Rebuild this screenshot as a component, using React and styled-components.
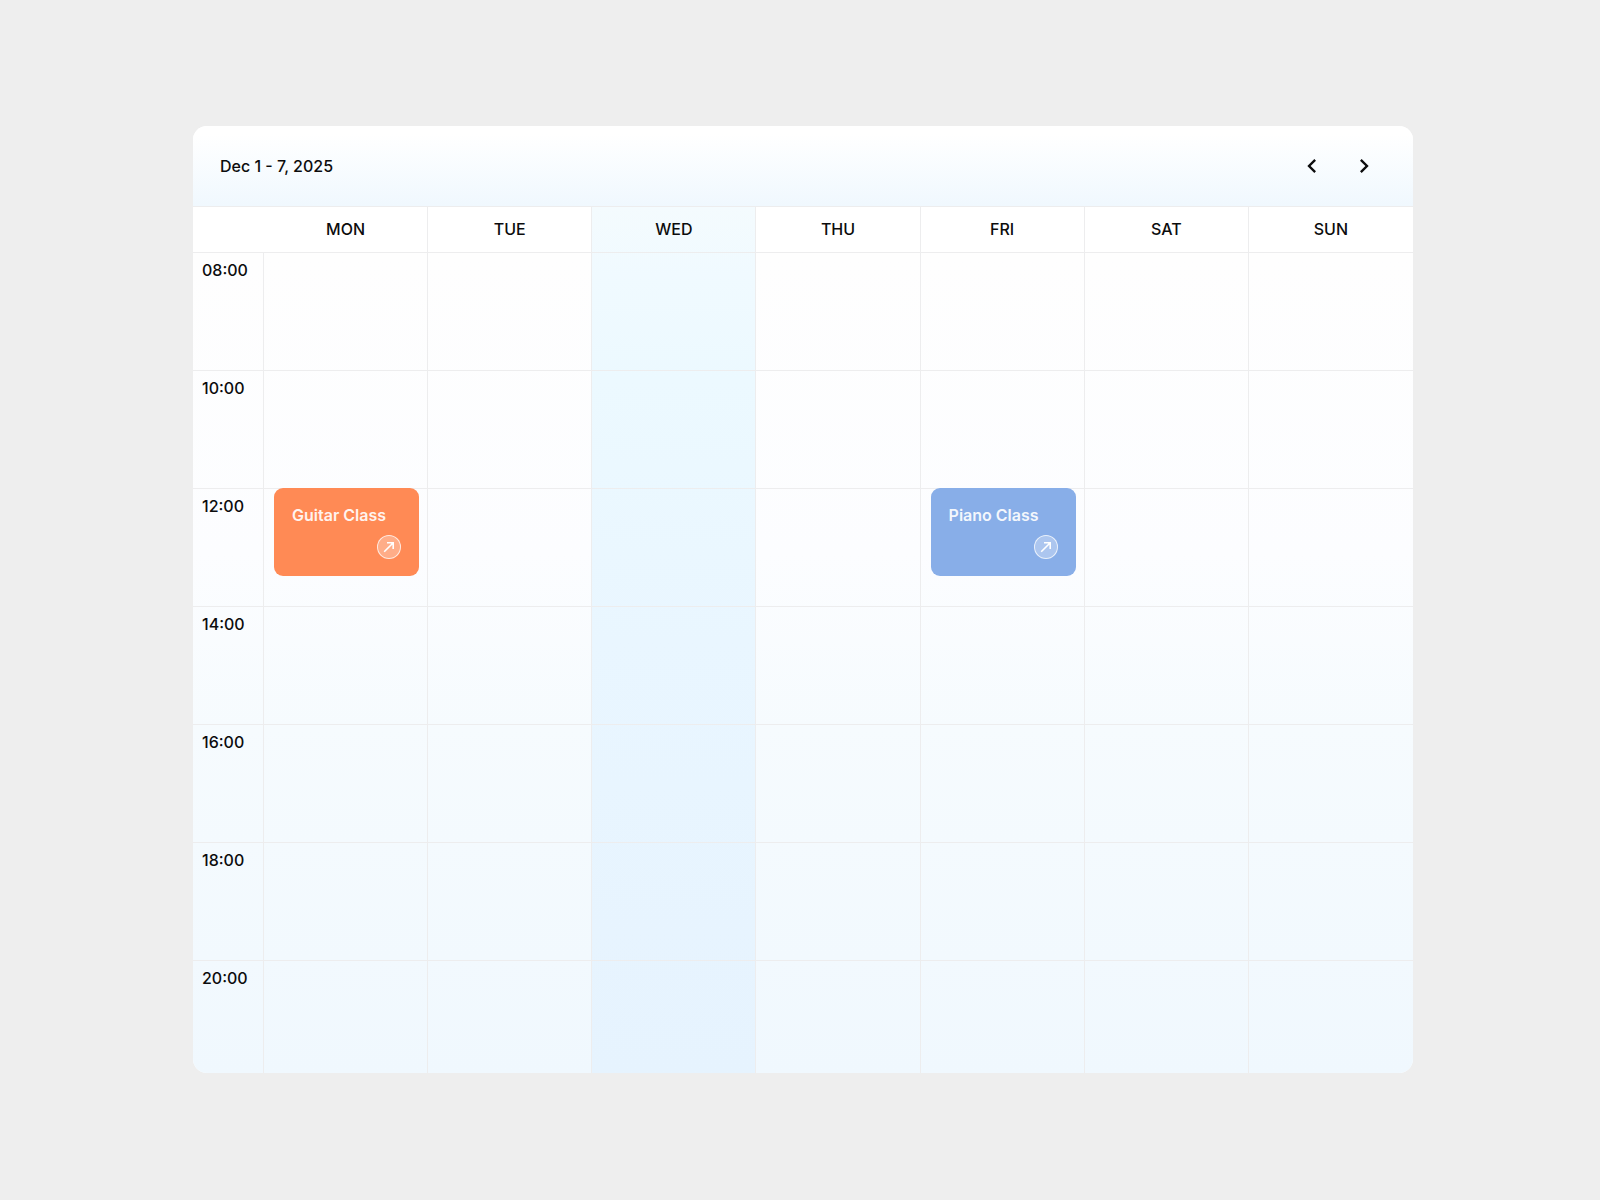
import React from "react";
import styled, { createGlobalStyle } from "styled-components";
import { MdChevronLeft, MdChevronRight } from "react-icons/md";

const GlobalStyle = createGlobalStyle`
  *, *::before, *::after { box-sizing: border-box; }
  body {
    margin: 0;
    background: #eeeeee;
    color: #0c0c0d;
    font-family: Inter, "Liberation Sans", sans-serif;
    font-size: 16px;
    font-weight: 500;
    line-height: 20px;
  }
  button { font: inherit; color: inherit; cursor: pointer; }
`;

const LINE = "#ededee";

const Page = styled.main`
  min-height: 100vh;
  padding: 126px 187px 126px 193px;
`;

const Card = styled.section`
  overflow: hidden;
  border-radius: 14px;
  background: #ffffff;
`;

const Toolbar = styled.header`
  display: flex;
  align-items: center;
  justify-content: space-between;
  height: 81px;
  padding: 0 29px 0 27px;
  border-bottom: 1px solid ${LINE};
  background: linear-gradient(180deg, #ffffff 10%, #f0f8fe 100%);
`;

const Range = styled.h1`
  margin: 0;
  font-size: 16px;
  font-weight: 500;
`;

const Nav = styled.nav`
  display: flex;
  gap: 12px;
`;

const NavButton = styled.button`
  display: grid;
  place-items: center;
  width: 40px;
  height: 40px;
  padding: 0;
  border: 0;
  border-radius: 8px;
  background: transparent;
`;

const Week = styled.table`
  width: 100%;
  table-layout: fixed;
  border-spacing: 0;
  background: linear-gradient(180deg, #fefefe 6%, #fcfdff 40%, #f6fbfe 60%, #f0f8fe 100%);
`;

const TimeCol = styled.col`
  width: 71px;
`;

const DayCol = styled.col`
  background: ${(p) =>
    p.$today ? "linear-gradient(180deg, #f4fbfe 0, #f0faff 8%, #ecf9ff 20%, #e9f6ff 50%, #e6f3fe 100%)" : "none"};
`;

const DayHead = styled.th`
  height: 46px;
  padding: 0 0 2px;
  border-bottom: 1px solid ${LINE};
  border-right: ${(p) => (p.$divider ? `1px solid ${LINE}` : "0")};
  background: ${(p) => (p.$today ? "transparent" : "#ffffff")};
  font-weight: 500;
`;

const Row = styled.tr`
  height: 118px;

  &:last-child {
    height: 112px;
  }
  &:last-child > * {
    border-bottom: 0;
  }
`;

const Time = styled.th`
  padding: 7px 0 0 9px;
  border-right: 1px solid ${LINE};
  border-bottom: 1px solid ${LINE};
  font-weight: 500;
  text-align: left;
  vertical-align: top;
`;

const Slot = styled.td`
  padding: 0 8px 0 10px;
  border-right: 1px solid ${LINE};
  border-bottom: 1px solid ${LINE};
  vertical-align: top;

  &:last-child {
    border-right: 0;
  }
`;

const Event = styled.article`
  display: flex;
  flex-direction: column;
  gap: 8px;
  height: 88px;
  margin-top: -1px;
  padding: 15px 18px 0;
  border-radius: 9px;
  background: ${(p) => p.$color};
  color: #ffffff;
`;

const EventTitle = styled.h2`
  margin: 0;
  font-size: 16px;
  font-weight: 600;
  line-height: 24px;
  opacity: 0.9;
  white-space: nowrap;
`;

const OpenButton = styled.button`
  display: grid;
  place-items: center;
  align-self: flex-end;
  width: 24px;
  height: 24px;
  padding: 0;
  border: 1px solid rgba(255, 255, 255, 0.75);
  border-radius: 50%;
  background: rgba(255, 255, 255, 0.3);
`;

const days = ["MON", "TUE", "WED", "THU", "FRI", "SAT", "SUN"];
const hours = ["08:00", "10:00", "12:00", "14:00", "16:00", "18:00", "20:00"];
const today = "WED";
const events = [
  { day: "MON", time: "12:00", title: "Guitar Class", color: "#ff8a55" },
  { day: "FRI", time: "12:00", title: "Piano Class", color: "#88aee8" },
];

function ArrowOut() {
  return (
    <svg width="12" height="12" viewBox="0 0 12 12" fill="none" stroke="currentColor" strokeWidth="1.6" aria-hidden="true">
      <path d="M1.2 10.8 10 2M4 1.8H10.2V8" />
    </svg>
  );
}

function EventCard({ event }) {
  return (
    <Event $color={event.color}>
      <EventTitle>{event.title}</EventTitle>
      <OpenButton type="button" aria-label={`Open ${event.title}`}>
        <ArrowOut />
      </OpenButton>
    </Event>
  );
}

export default function App() {
  return (
    <>
      <GlobalStyle />
      <Page>
        <Card>
          <Toolbar>
            <Range>Dec 1 - 7, 2025</Range>
            <Nav aria-label="Week">
              <NavButton type="button" aria-label="Previous week">
                <MdChevronLeft size={28} />
              </NavButton>
              <NavButton type="button" aria-label="Next week">
                <MdChevronRight size={28} />
              </NavButton>
            </Nav>
          </Toolbar>
          <Week>
            <colgroup>
              <TimeCol />
              {days.map((day) => (
                <DayCol key={day} $today={day === today} />
              ))}
            </colgroup>
            <thead>
              <tr>
                <DayHead as="td" />
                {days.map((day, i) => (
                  <DayHead key={day} scope="col" $today={day === today} $divider={i < days.length - 1}>
                    {day}
                  </DayHead>
                ))}
              </tr>
            </thead>
            <tbody>
              {hours.map((hour) => (
                <Row key={hour}>
                  <Time scope="row">{hour}</Time>
                  {days.map((day) => {
                    const event = events.find((e) => e.day === day && e.time === hour);
                    return <Slot key={day}>{event && <EventCard event={event} />}</Slot>;
                  })}
                </Row>
              ))}
            </tbody>
          </Week>
        </Card>
      </Page>
    </>
  );
}
